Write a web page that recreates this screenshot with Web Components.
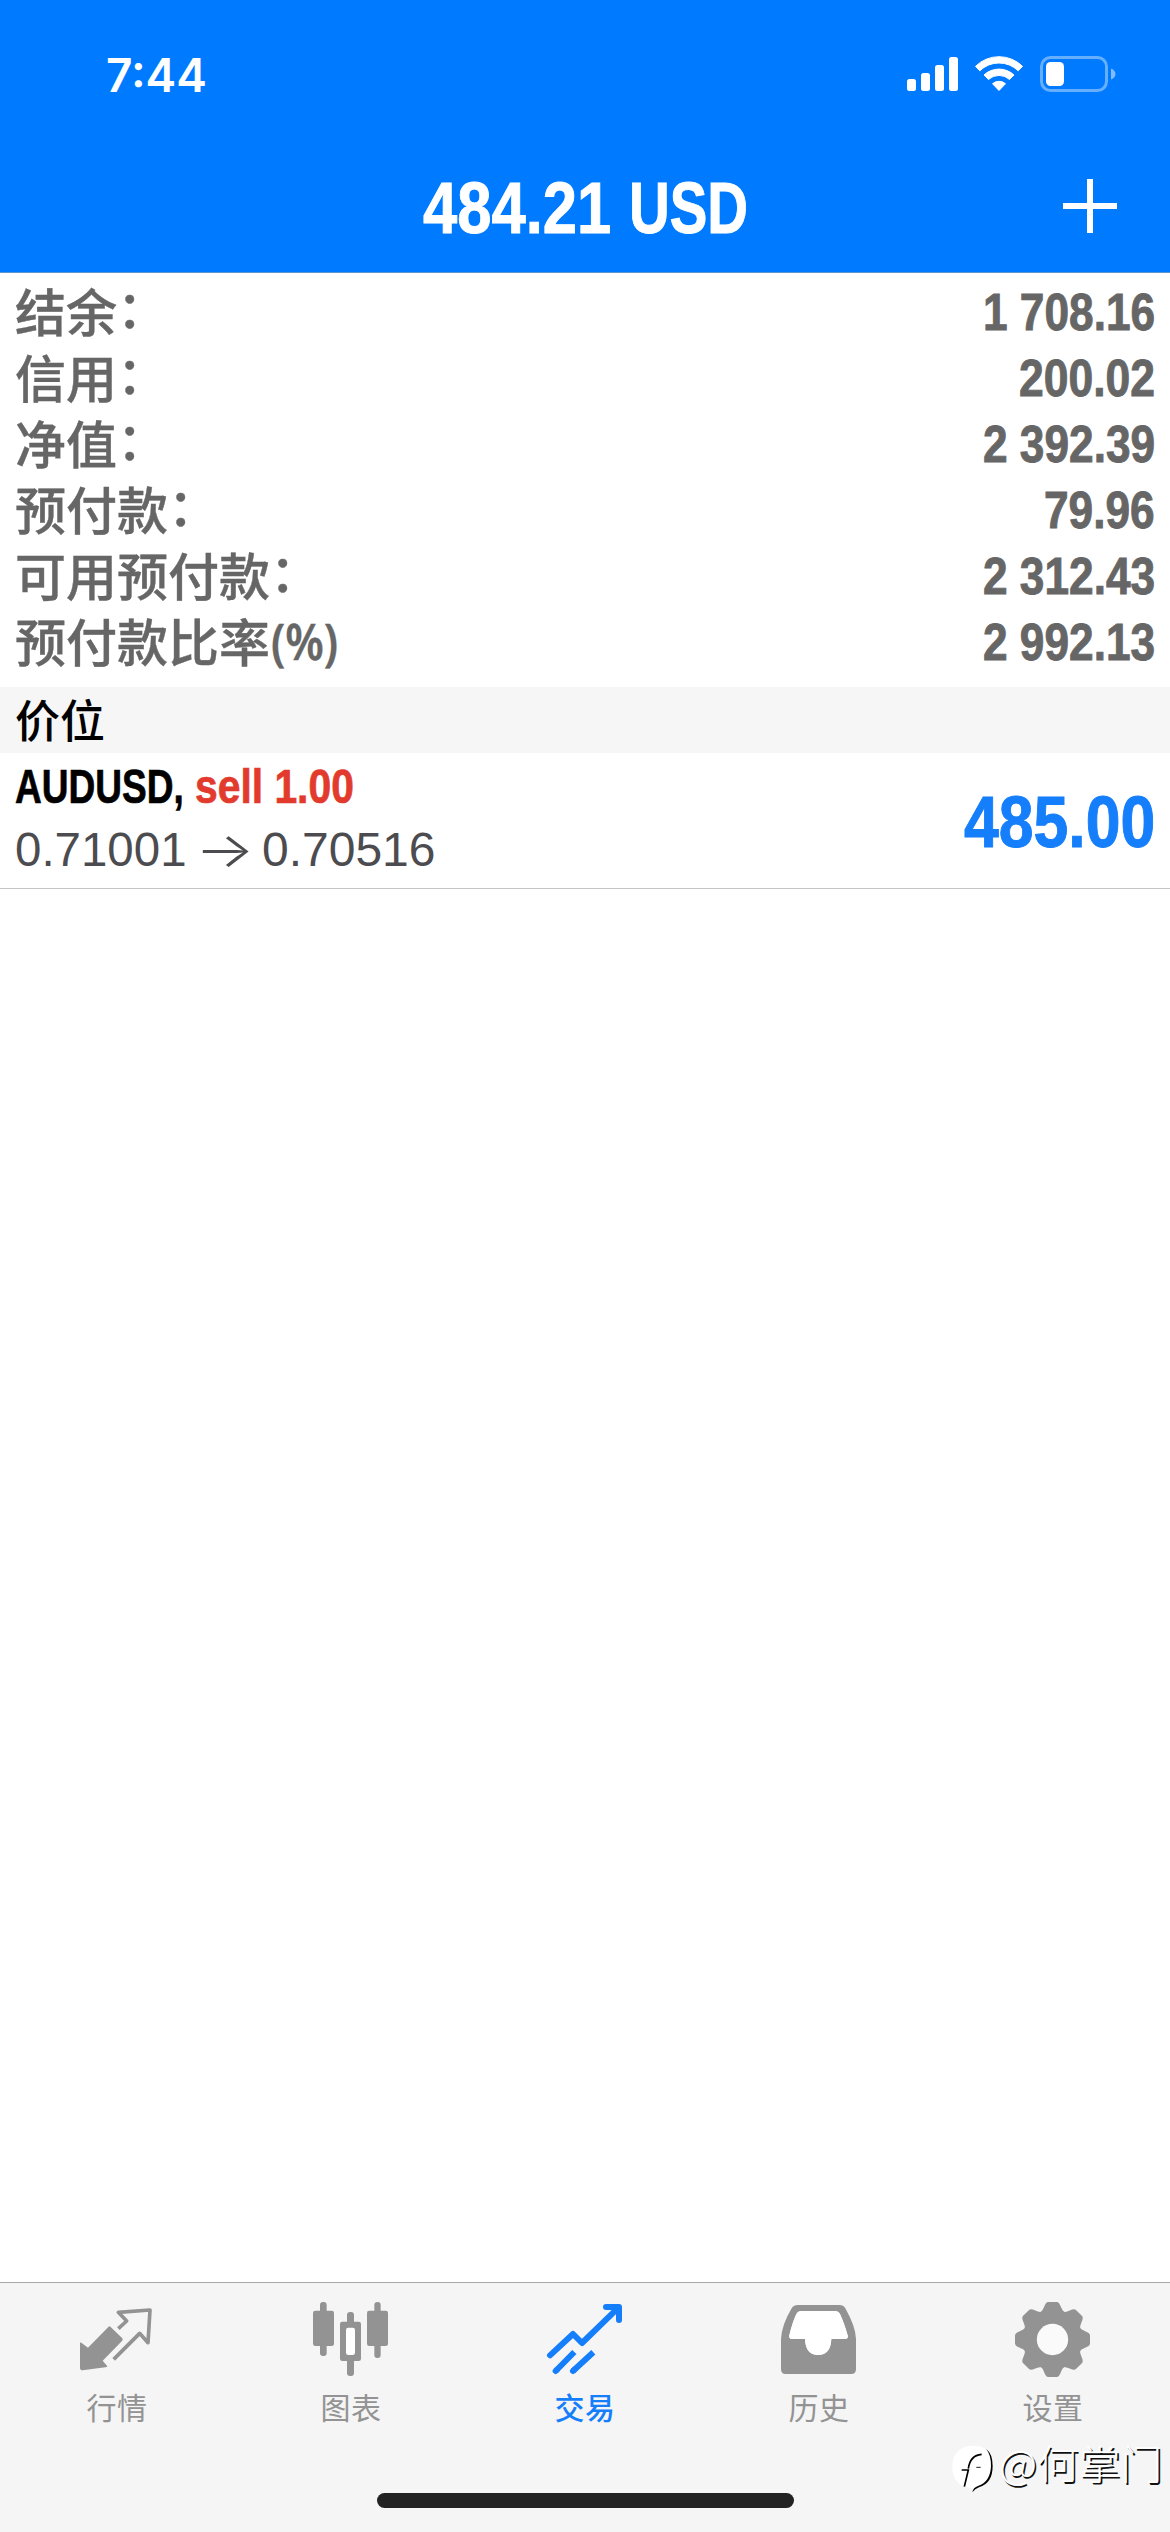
<!DOCTYPE html>
<html lang="zh-CN">
<head>
<meta charset="utf-8">
<title>交易</title>
<style>
html,body{margin:0;padding:0;background:#fff}
body{font-family:"Liberation Sans","Noto Sans CJK SC",sans-serif}
</style>
</head>
<body>
<trade-app></trade-app>
<script>
const define=(name,html,setup)=>customElements.define(name,class extends HTMLElement{
  connectedCallback(){
    if(this.shadowRoot)return;
    this.attachShadow({mode:'open'}).innerHTML=html;
    if(setup)setup(this,this.shadowRoot);
  }
});

/* Text squeezed horizontally to the width given in "w". */
define('fit-text',`<style>
:host{display:block;white-space:pre;flex:none}
span{display:inline-block;transform-origin:0 50%}
</style><span><slot></slot></span>`,(el,r)=>{
  const s=r.querySelector('span');
  const w=+el.getAttribute('w');
  el.style.width=w+'px';
  s.style.transform='scaleX('+w/s.offsetWidth+')';
});

define('status-bar',`<style>
:host{display:flex;height:146px;box-sizing:border-box;padding:49px 53px 0 106px;justify-content:space-between;align-items:flex-start;color:#fff}
fit-text{font:600 46px/52px Inter,sans-serif}
svg{display:block;margin-top:3px}
</style>
<fit-text w="101">7:44</fit-text>
<svg width="212" height="44" viewBox="905 52 212 44" fill="#fff">
<rect x="907" y="79" width="9" height="12" rx="2.5"/><rect x="921" y="73" width="9" height="18" rx="2.5"/><rect x="935" y="65" width="9" height="26" rx="2.5"/><rect x="949" y="57" width="9" height="34" rx="2.5"/>
<path d="M975.5 66.3A33.500 33.500 0 0 1 1022.500 66.300L1018.200 70.800A27.500 27.500 0 0 0 979.800 70.800Z" stroke="#fff" stroke-width="1" stroke-linejoin="round"/>
<path d="M984 75A22 22 0 0 1 1014 75L1009.500 79.500A15.500 15.500 0 0 0 988.500 79.500Z" stroke="#fff" stroke-width="1" stroke-linejoin="round"/>
<path d="M992.500 83.700A10 10 0 0 1 1005.500 83.700L999 90.500Z" stroke="#fff" stroke-width="1" stroke-linejoin="round"/>
<rect x="1041.500" y="57.500" width="65" height="33" rx="9" fill="none" stroke="#fff" stroke-opacity=".4" stroke-width="3"/>
<rect x="1046" y="62" width="18" height="24" rx="4.500"/>
<path d="M1111 68.500Q1115.500 70.500 1115.500 74Q1115.500 77.500 1111 79.500Z" fill-opacity=".5"/>
</svg>`);

define('nav-bar',`<style>
:host{display:grid;grid-template-columns:1fr auto 1fr;align-items:start;height:126px;color:#fff}
div{grid-column:2;display:flex;gap:18px;font:bold 73px/84px "Liberation Sans",sans-serif;margin-top:20px;-webkit-text-stroke:1px #fff}
svg{justify-self:end;margin:33px 53px 0 0;display:block}
</style>
<div><fit-text w="188">484.21</fit-text><fit-text w="119">USD</fit-text></div>
<svg width="54" height="54" viewBox="0 0 54 54" stroke="#fff" stroke-width="6"><path d="M27 0V54M0 27H54"/></svg>`);

define('app-header',`<style>
:host{display:block;background:#007aff;border-bottom:1px solid #5b94cf;height:272px}
</style><status-bar></status-bar><nav-bar></nav-bar>`);

define('balance-row',`<style>
:host{display:flex;justify-content:space-between;align-items:center;height:66px;padding:0 15px;color:#666}
.l{display:flex;margin-top:5px;font:500 51px/66px "Liberation Sans","Noto Sans CJK SC",sans-serif;white-space:nowrap;-webkit-text-stroke:.4px #666}
.n{font:bold 51px/66px "Liberation Sans",sans-serif;margin-top:2px;-webkit-text-stroke:.9px #666}
</style><span class="l"><slot></slot></span>`,(el,r)=>{
  const f=document.createElement('fit-text');
  f.className='n';
  f.setAttribute('w',el.getAttribute('w'));
  f.textContent=el.getAttribute('value');
  r.append(f);
});

define('section-title',`<style>
:host{display:block;background:#f6f6f6;height:66px;margin-top:12px;padding:0 15px;font:500 45px/63px "Noto Sans CJK SC",sans-serif;color:#000}
</style><slot></slot>`);

define('position-row',`<style>
:host{display:flex;justify-content:space-between;align-items:center;height:135px;padding:0 15px;border-bottom:1px solid #c4c4c6}
.t,.p{display:flex;height:63px}
.c{margin-top:-5px}
.t{font:bold 48px/63px "Liberation Sans",sans-serif;color:#000;gap:11px;-webkit-text-stroke:.7px}
.t .s{color:#e23b2e}
.p{font:48px/63px "Liberation Sans",sans-serif;color:#4c4c50}
.a{font-family:Inter,sans-serif;font-weight:300;margin:0 7px 0 8px}
.v{font:bold 72px/84px "Liberation Sans",sans-serif;color:#157efb;margin-top:2px;-webkit-text-stroke:1px}
</style>
<div class="c"><div class="t"><fit-text w="169">AUDUSD,</fit-text><fit-text class="s" w="159">sell 1.00</fit-text></div>
<div class="p"><fit-text w="172">0.71001</fit-text><fit-text class="a" w="60">→</fit-text><fit-text w="174">0.70516</fit-text></div></div>
<fit-text class="v" w="191">485.00</fit-text>`);

const icons={
quotes:`<svg viewBox="114 90 234 234"><path d="M122 217L144 233L205 171Q208 167 212 171L247 205Q250 209 246 213L188 272L202 289Q201 292 196 292L128 301Q120 301 120 294V220Z"/><path fill="none" stroke="currentColor" stroke-width="11" stroke-linejoin="round" stroke-linecap="butt" d="M235 176L260 153L235 127L330 120L324 218L299 190L221 268"/></svg>`,
chart:`<svg viewBox="816 90 234 234"><rect x="819" y="122" width="63" height="106" rx="7"/><rect x="840" y="96" width="20" height="162" rx="9"/><rect x="981" y="122" width="63" height="106" rx="7"/><rect x="1003" y="96" width="19" height="168" rx="9"/><rect x="921" y="126" width="21" height="40" rx="9"/><rect x="921" y="264" width="21" height="54" rx="9"/><rect x="900" y="155" width="63" height="118" rx="7"/><rect x="918" y="173" width="27" height="82" rx="7" fill="#fff"/></svg>`,
trade:`<svg viewBox="138 90 234 234" fill="none" stroke="currentColor" stroke-width="18" stroke-linecap="round" stroke-linejoin="round"><path d="M150 256L219 192L246 219L356 112M318 111H357V150"/><path stroke-linecap="butt" d="M167 303L223 246M219 303L280 247"/><path d="M167 303L170 300M219 303L222 300"/></svg>`,
history:`<svg viewBox="840 90 234 234"><path fill-rule="evenodd" d="M894 105H1018Q1030 105 1036 115Q1067 170 1068 207V298Q1068 312 1054 312H857Q843 312 843 298V207Q845 165 875 115Q881 105 894 105ZM904 123Q894 123 889 132Q877 158 868 196Q866 207 876 207H915Q917 255 954 255Q992 255 994 207H1034Q1046 207 1043 196Q1032 158 1020 132Q1015 123 1005 123Z"/><path fill="#fff" d="M904 123Q894 123 889 132Q877 158 868 196Q866 207 876 207H915Q917 255 954 255Q992 255 994 207H1034Q1046 207 1043 196Q1032 158 1020 132Q1015 123 1005 123Z"/></svg>`,
settings:`<svg viewBox="282 90 234 234"><g transform="translate(397.500 208.500)"><circle r="90"/><g id="g"></g><circle r="47" fill="#fafafa"/></g></svg>`
};
define('tab-item',`<style>
:host{display:flex;flex:1;flex-direction:column;align-items:center;padding-top:17px;color:#939393}
:host([active]){color:#157efb}
svg{width:78px;height:78px;display:block;fill:currentColor}
svg[fill=none]{fill:none}
span{font:400 30px/36px "Noto Sans CJK SC",sans-serif;margin-top:10px;letter-spacing:.5px}
:host([active]) span{font-weight:500}
</style><div class="i"></div><span><slot></slot></span>`,(el,r)=>{
  r.querySelector('.i').innerHTML=icons[el.getAttribute('icon')];
  const g=r.querySelector('#g');
  if(g){let s='';for(let a=0;a<360;a+=45)s+=`<path transform="rotate(${a})" d="M-37 -80Q-30 -85 -25 -98Q-20 -112 -13 -112.500H13Q20 -112 25 -98Q30 -85 37 -80Z"/>`;g.innerHTML=s;}
});

define('author-mark',`<style>
:host{position:absolute;left:951px;top:2444px;display:flex;align-items:center;color:#fff}
svg{display:block;width:44px;height:50px}
fit-text{font:300 40px/50px "Noto Sans CJK SC",sans-serif;text-shadow:1.500px 1.500px 0 #111;margin-left:4px;margin-top:-14px}
</style>
<svg viewBox="92 522 132 150"><path fill="#fff" d="M160 527C195 527 218 548 218 590C218 628 195 650 155 654C118 650 96 632 96 590C96 548 120 527 160 527Z"/><path d="M197 537Q217 551 217 588Q217 640 176 652Q164 656 156 667Q159 652 173 648Q210 636 212 588Q212 553 197 537Z"/><path d="M124 600H144L132 650M144 596Q149 556 184 553" fill="none" stroke="#000" stroke-width="5"/><path d="M168 592H181" stroke="#222" stroke-width="3"/></svg>
<fit-text w="163">@何掌门</fit-text>`);

define('tab-bar',`<style>
:host{display:flex;flex-direction:column;align-items:center;height:249px;background:#f5f5f5;border-top:1px solid #a9a9ab}
nav{display:flex;width:100%;height:210px}
i{width:417px;height:15px;border-radius:8px;background:#222}
</style><nav><slot></slot></nav><i></i>`);

define('trade-app',`<style>
:host{display:flex;flex-direction:column;width:1170px;height:2532px;position:relative;overflow:hidden;background:#fff}
.b{padding-top:6px}
main{flex:1}
.k{margin:-4px 0 0 0}
.pc{font-family:"Noto Sans",sans-serif;font-weight:600;font-size:50px;margin:-4px 0 0 1px}
</style>
<app-header></app-header>
<main><div class="b">
<balance-row value="1 708.16" w="172.5">结余<span class="k">：</span></balance-row>
<balance-row value="200.02" w="136">信用<span class="k">：</span></balance-row>
<balance-row value="2 392.39" w="172.5">净值<span class="k">：</span></balance-row>
<balance-row value="79.96" w="111">预付款<span class="k">：</span></balance-row>
<balance-row value="2 312.43" w="172.5">可用预付款<span class="k">：</span></balance-row>
<balance-row value="2 992.13" w="172.5">预付款比率<fit-text class="pc" w="67">(%)</fit-text></balance-row>
</div>
<section-title>价位</section-title>
<position-row></position-row></main>
<tab-bar>
<tab-item icon="quotes">行情</tab-item><tab-item icon="chart">图表</tab-item><tab-item icon="trade" active>交易</tab-item><tab-item icon="history">历史</tab-item><tab-item icon="settings">设置</tab-item>
</tab-bar>
<author-mark></author-mark>`);
</script>
</body>
</html>
